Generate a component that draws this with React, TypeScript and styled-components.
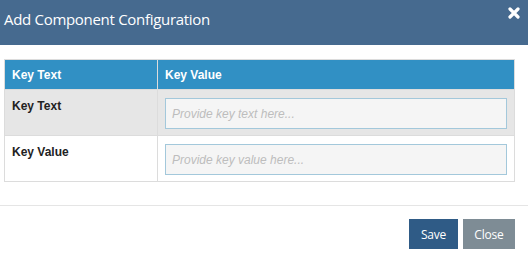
import * as React from 'react';
import styled, { createGlobalStyle } from 'styled-components';

const GlobalStyle = createGlobalStyle`
  html, body {
    margin: 0;
    padding: 0;
    background: #fff;
  }
`;

const Modal = styled.div`
  width: 528px;
  height: 254px;
  display: flex;
  flex-direction: column;
  background: #fff;
`;

const Header = styled.div`
  height: 45px;
  box-sizing: border-box;
  background: #466a8f;
  display: flex;
  justify-content: space-between;
  align-items: flex-start;
  padding: 0 8px 0 4px;
`;

const Title = styled.h4`
  margin: 0;
  padding-top: 9px;
  font-family: "Open Sans", sans-serif;
  font-weight: 400;
  font-size: 15px;
  letter-spacing: -0.3px;
  color: #fff;
`;

const CloseIcon = styled.button`
  border: none;
  background: none;
  padding: 0;
  margin-top: 7px;
  width: 12px;
  height: 12px;
  cursor: pointer;
  display: flex;
`;

const Body = styled.div`
  padding: 14px 13px 23px 4px;
  border-bottom: 1px solid #e5e5e5;
`;

const Table = styled.table`
  width: 100%;
  border-collapse: collapse;
  border: 1px solid #dcdcdc;
  font-family: "Liberation Sans", Arial, sans-serif;
  font-size: 12px;
`;

const HeadCell = styled.th<{ $w?: number }>`
  background: #3190c4;
  color: #fff;
  font-weight: 700;
  text-align: left;
  height: 30px;
  padding: 0 0 0 7px;
  border-left: 1px solid #dcdcdc;
  width: ${(p) => (p.$w ? `${p.$w}px` : 'auto')};
  box-sizing: border-box;
`;

const Row = styled.tr<{ $shade?: boolean }>`
  background: ${(p) => (p.$shade ? '#e6e6e6' : '#fff')};
  border-top: 1px solid #dcdcdc;
`;

const LabelCell = styled.td`
  vertical-align: top;
  font-weight: 700;
  color: #222;
  padding: 9px 7px 0 7px;
`;

const InputCell = styled.td`
  border-left: 1px solid #dcdcdc;
  padding: 8px 7px 6px 7px;
`;

const TextInput = styled.input`
  display: block;
  width: 100%;
  height: 31px;
  box-sizing: border-box;
  border: 1px solid #a3c8db;
  background: #f5f5f5;
  padding: 0 6px;
  font-family: "Liberation Sans", Arial, sans-serif;
  font-size: 12px;
  outline: none;
  &::placeholder {
    color: #bdbdbd;
    font-style: italic;
  }
`;

const Footer = styled.div`
  display: flex;
  justify-content: flex-end;
  gap: 5px;
  padding: 13px 13px 0 0;
`;

const Button = styled.button<{ $variant: 'primary' | 'muted'; $w: number }>`
  width: ${(p) => p.$w}px;
  height: 30px;
  border: none;
  padding: 0;
  color: #fff;
  font-family: "Open Sans", sans-serif;
  font-size: 12px;
  letter-spacing: -0.2px;
  background: ${(p) => (p.$variant === 'primary' ? '#2f5b86' : '#7e8c95')};
  cursor: pointer;
`;

const fields = [
  { label: 'Key Text', placeholder: 'Provide key text here...' },
  { label: 'Key Value', placeholder: 'Provide key value here...' },
];

export default function App() {
  return (
    <Modal>
      <GlobalStyle />
      <Header>
        <Title>Add Component Configuration</Title>
        <CloseIcon type="button" aria-label="Close">
          <svg width="12" height="12" viewBox="0 0 12 12">
            <path
              d="M2 2 L10 10 M10 2 L2 10"
              stroke="#fff"
              strokeWidth="3.2"
              strokeLinecap="round"
            />
          </svg>
        </CloseIcon>
      </Header>
      <Body>
        <Table>
          <thead>
            <tr>
              <HeadCell $w={153}>Key Text</HeadCell>
              <HeadCell>Key Value</HeadCell>
            </tr>
          </thead>
          <tbody>
            {fields.map((f, i) => (
              <Row key={f.label} $shade={i === 0}>
                <LabelCell>{f.label}</LabelCell>
                <InputCell>
                  <TextInput placeholder={f.placeholder} />
                </InputCell>
              </Row>
            ))}
          </tbody>
        </Table>
      </Body>
      <Footer>
        <Button $variant="primary" $w={49}>Save</Button>
        <Button $variant="muted" $w={52}>Close</Button>
      </Footer>
    </Modal>
  );
}
